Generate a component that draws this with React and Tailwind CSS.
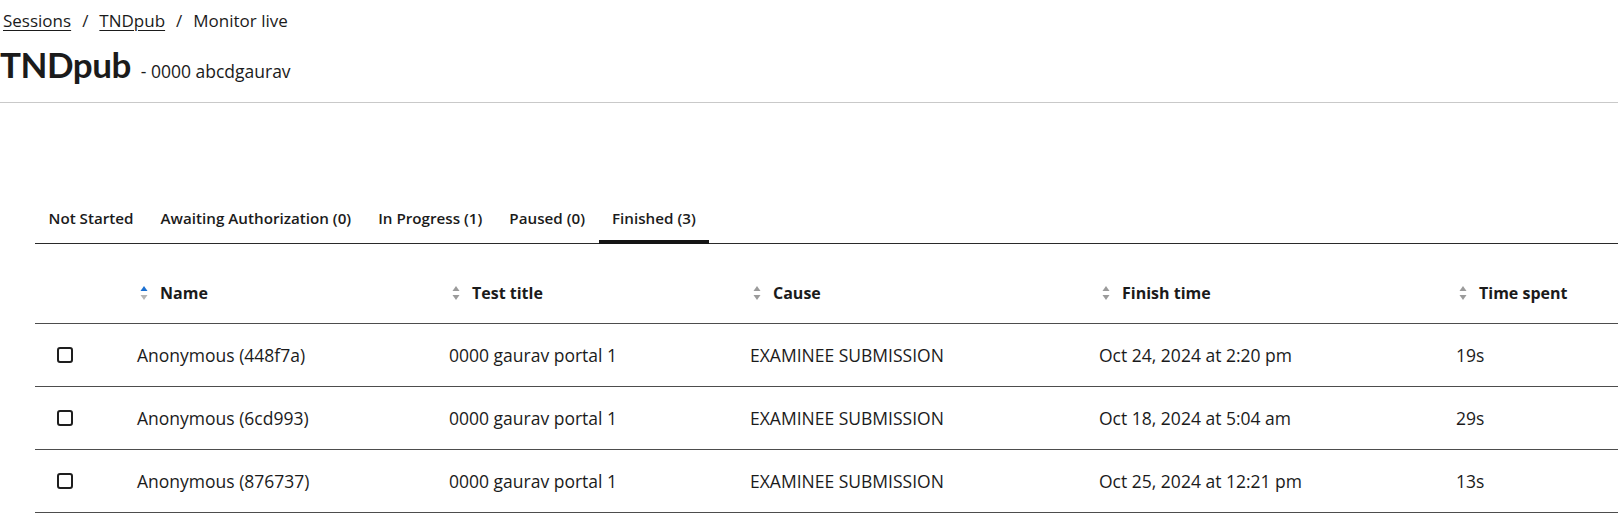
const tabs = [
  { label: "Not Started" },
  { label: "Awaiting Authorization (0)" },
  { label: "In Progress (1)" },
  { label: "Paused (0)" },
  { label: "Finished (3)", active: true },
];

const columns = [
  { key: "name", label: "Name", width: "w-[312px]", sorted: true },
  { key: "title", label: "Test title", width: "w-[301px]" },
  { key: "cause", label: "Cause", width: "w-[349px]" },
  { key: "finish", label: "Finish time", width: "w-[357px]" },
  { key: "spent", label: "Time spent", width: "" },
];

const rows = [
  { id: 1, name: "Anonymous (448f7a)", title: "0000 gaurav portal 1", cause: "EXAMINEE SUBMISSION", finish: "Oct 24, 2024 at 2:20 pm", spent: "19s" },
  { id: 2, name: "Anonymous (6cd993)", title: "0000 gaurav portal 1", cause: "EXAMINEE SUBMISSION", finish: "Oct 18, 2024 at 5:04 am", spent: "29s" },
  { id: 3, name: "Anonymous (876737)", title: "0000 gaurav portal 1", cause: "EXAMINEE SUBMISSION", finish: "Oct 25, 2024 at 12:21 pm", spent: "13s" },
];

// little up/down carets next to column titles
const SortIcon = ({ active }) => (
  <svg width="8" height="16" viewBox="0 0 8 16" className="shrink-0">
    <polygon points="0.5,6 4,1 7.5,6" fill={active ? "#1a6fd1" : "#9b9b9b"} />
    <polygon points="0.5,10 4,15 7.5,10" fill={active ? "#b5b5b5" : "#9b9b9b"} />
  </svg>
);

const App = () => {
  return (
    <div className="w-[1618px] h-[516px] overflow-hidden bg-white text-[#1b1b1b] font-['Open_Sans','Noto_Sans',sans-serif]">
      {/* Breadcrumb + title */}
      <nav className="pt-[10px] pl-[3px] text-[17px] leading-[22px] flex items-center gap-[11px]">
        <a className="underline underline-offset-[3px]">Sessions</a>
        <span>/</span>
        <a className="underline underline-offset-[3px]">TNDpub</a>
        <span>/</span>
        <span>Monitor live</span>
      </nav>
      <div className="flex items-baseline mt-[10px] h-[44px]">
        <h1 className="font-['Lato',sans-serif] text-[35px] leading-[44px] font-bold tracking-[-0.5px]">TNDpub</h1>
        <span className="ml-[10px] text-[17.5px]">- 0000 abcdgaurav</span>
      </div>
      <div className="mt-[16px] border-t border-[#c9c9c9]" />

      {/* Tabs */}
      <div className="pl-[35px] pt-[96px]">
        <div className="flex border-b border-[#2a2a2a] text-[15.2px] font-semibold">
          {tabs.map((t) => (
            <div
              key={t.label}
              className={`px-[13.5px] pt-[8px] pb-[10px] -mb-px border-b-[4px] ${t.active ? "border-[#151515]" : "border-transparent"}`}
            >
              {t.label}
            </div>
          ))}
        </div>

        {/* Table */}
        <table className="table-fixed w-[1583px] mt-[23px] text-[17.5px] border-collapse">
          <thead>
            <tr className="border-b border-[#4d4d4d] h-[57px] text-[16px]">
              <th className="w-[86px]" />
              {columns.map((c) => (
                <th key={c.key} className={`${c.width} text-left font-bold pl-[19px] pb-[5px]`}>
                  <div className="flex items-center gap-[12px]">
                    <SortIcon active={c.sorted} />
                    <span>{c.label}</span>
                  </div>
                </th>
              ))}
            </tr>
          </thead>
          <tbody>
            {rows.map((r) => (
              <tr key={r.id} className="border-b border-[#4d4d4d] h-[63px]">
                <td className="pl-[22px]">
                  <div className="w-[16px] h-[16px] rounded-[3px] border-2 border-[#1e1e1e]" />
                </td>
                <td className="pl-[16px]">{r.name}</td>
                <td className="pl-[16px]">{r.title}</td>
                <td className="pl-[16px]">{r.cause}</td>
                <td className="pl-[16px]">{r.finish}</td>
                <td className="pl-[16px]">{r.spent}</td>
              </tr>
            ))}
          </tbody>
        </table>
      </div>
    </div>
  );
};

export default App;
